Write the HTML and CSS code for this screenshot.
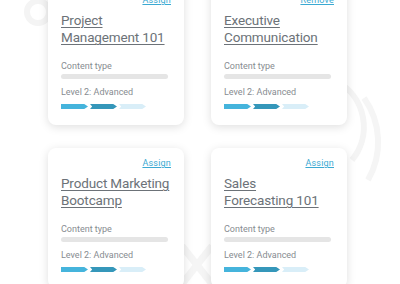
FILE: index.html
```html
<!DOCTYPE html>
<html lang="en">
<head>
    <meta charset="UTF-8" />
    <title>Courses</title>
    <link rel="stylesheet" href="styles.css">
</head>
<body>
    <div class="stage">
        <svg class="decor" viewBox="0 0 400 284" width="400" height="284">
            <circle cx="38" cy="12" r="11" fill="none" stroke="#f4f4f4" stroke-width="6" />
            <path d="M338 82 A52 52 0 0 1 352 160" fill="none" stroke="#f4f4f4" stroke-width="6" />
            <path d="M364 98 A76 76 0 0 1 368 180" fill="none" stroke="#f5f5f5" stroke-width="6" />
            <path d="M182 246 L212 284 M212 246 L182 284" fill="none" stroke="#f5f5f5" stroke-width="7" />
        </svg>

        <div class="grid">
            <div class="card">
                <div class="card-top"><a href="#">Assign</a></div>
                <h2 class="title"><a href="#">Project<br>Management 101</a></h2>
                <div class="label">Content type</div>
                <div class="bar"></div>
                <div class="label level">Level 2: Advanced</div>
                <div class="steps">
                    <span class="step step-1"></span>
                    <span class="step step-2"></span>
                    <span class="step step-3"></span>
                </div>
            </div>

            <div class="card">
                <div class="card-top"><a href="#">Remove</a></div>
                <h2 class="title"><a href="#">Executive<br>Communication</a></h2>
                <div class="label">Content type</div>
                <div class="bar"></div>
                <div class="label level">Level 2: Advanced</div>
                <div class="steps">
                    <span class="step step-1"></span>
                    <span class="step step-2"></span>
                    <span class="step step-3"></span>
                </div>
            </div>

            <div class="card">
                <div class="card-top"><a href="#">Assign</a></div>
                <h2 class="title"><a href="#">Product Marketing<br>Bootcamp</a></h2>
                <div class="label">Content type</div>
                <div class="bar"></div>
                <div class="label level">Level 2: Advanced</div>
                <div class="steps">
                    <span class="step step-1"></span>
                    <span class="step step-2"></span>
                    <span class="step step-3"></span>
                </div>
            </div>

            <div class="card">
                <div class="card-top"><a href="#">Assign</a></div>
                <h2 class="title"><a href="#">Sales<br>Forecasting 101</a></h2>
                <div class="label">Content type</div>
                <div class="bar"></div>
                <div class="label level">Level 2: Advanced</div>
                <div class="steps">
                    <span class="step step-1"></span>
                    <span class="step step-2"></span>
                    <span class="step step-3"></span>
                </div>
            </div>
        </div>
    </div>
</body>
</html>
```

FILE: styles.css
```css
body {
    margin: 0;
    background: #fff;
    font-family: Roboto, sans-serif;
}
.stage {
    position: relative;
    width: 400px;
    height: 284px;
    overflow: hidden;
}
.decor {
    position: absolute;
    left: 0;
    top: 0;
}
.grid {
    position: relative;
    display: grid;
    grid-template-columns: 136px 136px;
    column-gap: 27px;
    row-gap: 23px;
    padding-left: 48px;
    margin-top: -15px;
}
.card {
    height: 140px;
    box-sizing: border-box;
    padding: 10px 13px 0;
    background: #fff;
    border-radius: 8px;
    box-shadow: 0 2px 10px rgba(0, 0, 0, 0.13);
}
.card-top {
    text-align: right;
    font-size: 9px;
    line-height: 11px;
    letter-spacing: 0.2px;
}
.card-top a {
    color: #3ba9d2;
}
.title {
    margin: 6px -10px 0 0;
    font-size: 13.5px;
    font-weight: 400;
    line-height: 17px;
    height: 34px;
    letter-spacing: -0.15px;
    white-space: nowrap;
}
.title a {
    color: #6c7278;
    text-decoration-thickness: 1px;
    text-underline-offset: 2px;
}
.label {
    margin-top: 14px;
    font-size: 9px;
    line-height: 12px;
    color: #878c91;
}
.bar {
    margin-top: 2px;
    width: 107px;
    height: 5px;
    border-radius: 3px;
    background: #e5e5e5;
}
.label.level {
    margin-top: 7px;
}
.steps {
    display: flex;
    gap: 2px;
    margin-top: 6px;
}
.step {
    display: block;
    width: 27px;
    height: 5px;
    clip-path: polygon(0 0, 86% 0, 100% 50%, 86% 100%, 0 100%, 8% 50%);
}
.step-1 {
    background: #45b4dc;
    clip-path: polygon(0 0, 86% 0, 100% 50%, 86% 100%, 0 100%);
}
.step-2 {
    background: #3597ba;
}
.step-3 {
    background: #d9eef8;
}
```
